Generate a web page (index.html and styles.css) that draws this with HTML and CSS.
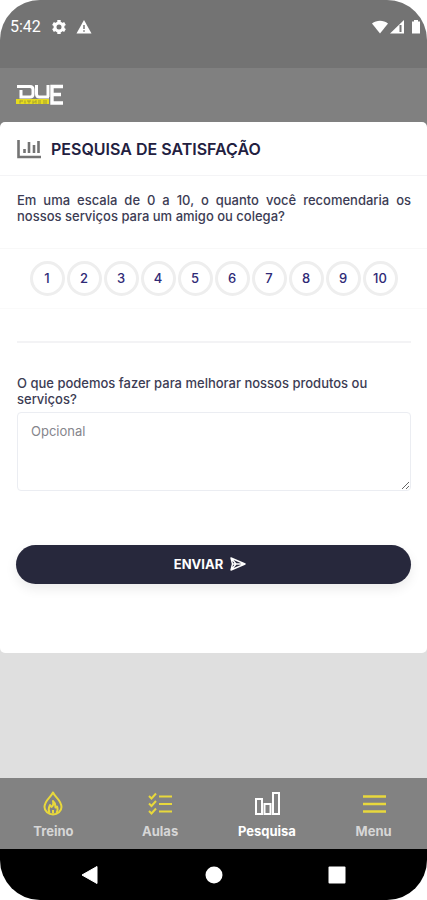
FILE: index.html
```html
<!DOCTYPE html>
<html lang="pt-BR">
<head>
  <meta charset="UTF-8">
  <meta name="viewport" content="width=device-width, initial-scale=1">
  <title>Pesquisa de Satisfação</title>
  <link rel="stylesheet" href="styles.css">
</head>
<body>

<div class="phone">
  <div class="status-bar">
    <span class="clock">5:42</span>
    <svg class="status-gear" width="16" height="16" viewBox="0 0 16 16">
      <circle cx="8" cy="8" r="4" fill="none" stroke="#fff" stroke-width="3"/>
      <path d="M8 1v3M8 12v3M2 4.500l2.500 1.500M11.500 10l2.500 1.500M2 11.500l2.500-1.500M11.500 6l2.500-1.500" stroke="#fff" stroke-width="3.400"/>
    </svg>
    <svg width="16" height="16" viewBox="0 0 16 16">
      <path d="M8 1l7.500 13.500h-15z" fill="#fff"/>
      <path d="M8 6v4M8 11.300v1.500" stroke="#737373" stroke-width="1.500"/>
    </svg>
    <div class="status-right">
      <svg width="18" height="16" viewBox="0 0 18 16">
        <path d="M1 4.500C5.500.800 12.500.800 17 4.500L9 14.500z" fill="#fff"/>
      </svg>
      <svg width="16" height="16" viewBox="0 0 16 16">
        <path d="M15 1v13.500H1z" fill="#fff"/>
        <path d="M11.500 6v7" stroke="#737373" stroke-width="2"/>
      </svg>
      <svg class="status-battery" width="10" height="16" viewBox="0 0 10 16">
        <path d="M3 1h4v1.500h2v12H1v-12h2z" fill="#fff"/>
      </svg>
    </div>
  </div>

  <header>
    <svg class="logo" width="48" height="22" viewBox="0 0 48 22" role="img" aria-label="DUE Fitness">
      <path d="M1 2.500H14Q17 2.500 17 5.500V10Q17 13 14 13H5V6" fill="none" stroke="#fff" stroke-width="3"/>
      <path d="M20.500 1V10Q20.500 13 23.500 13H33" fill="none" stroke="#fff" stroke-width="3"/>
      <path d="M32 1V13" stroke="#fff" stroke-width="3"/>
      <path d="M47 2.500H36V19H47M36 10.500H45" fill="none" stroke="#fff" stroke-width="3.400"/>
      <path d="M0 15h33v5H0z" fill="#e6dc1e"/>
      <path d="M4 16.500v3M4 17h3M9 16.500v3M11 17h4M13 17v2.500M17 16.500v3l3-3v3M22 17h3M22 19h3M27 17h4M27 19h4" stroke="#a39d30" fill="none"/>
    </svg>
  </header>

  <main>
    <form class="card">
      <div class="card-title">
        <svg width="25" height="20" viewBox="0 0 25 20">
          <path d="M1.500 1v17H24" fill="none" stroke="#737373" stroke-width="2.600"/>
          <path d="M7.500 10v4M12 3v11M17 6v8M21.500 2v12" stroke="#737373" stroke-width="2.600"/>
        </svg>
        <h1>PESQUISA DE SATISFAÇÃO</h1>
      </div>

      <p class="question">Em uma escala de 0 a 10, o quanto você recomendaria os nossos serviços para um amigo ou colega?</p>

      <div class="scores">
        <button type="button">1</button>
        <button type="button">2</button>
        <button type="button">3</button>
        <button type="button">4</button>
        <button type="button">5</button>
        <button type="button">6</button>
        <button type="button">7</button>
        <button type="button">8</button>
        <button type="button">9</button>
        <button type="button">10</button>
      </div>

      <div class="comment">
        <label for="comment">O que podemos fazer para melhorar nossos produtos ou serviços?</label>
        <textarea id="comment" placeholder="Opcional"></textarea>
      </div>

      <button type="submit" class="send">
        ENVIAR
        <svg width="18" height="16" viewBox="0 0 18 16">
          <path d="M2 2l14 6-14 6 1.500-6zM3.500 8H15M2 2l5 6-5 6" fill="none" stroke="#fff" stroke-width="1.400" stroke-linejoin="round"/>
        </svg>
      </button>
    </form>
  </main>

  <nav class="tabs">
    <a href="#treino">
      <svg width="26" height="26" viewBox="0 0 26 26" fill="none" stroke="#e8d83c" stroke-width="2" stroke-linejoin="round">
        <path d="M13 2.500C11 7 4.500 10.500 4.500 17a8.500 7.500 0 0 0 17 0C21.500 10.500 15 7 13 2.500z"/>
        <path d="M9.500 23c-2-4-.500-6 .500-8l1.500 2c2-1.500 2-4 1.500-6 3 2.500 2 4.500 2.500 6.500l1.500-1c1 2 .500 4.500-.500 6.500"/>
        <path d="M13 20v3.500"/>
      </svg>
      Treino
    </a>
    <a href="#aulas">
      <svg width="26" height="26" viewBox="0 0 26 26" fill="none" stroke="#e8d83c" stroke-width="2">
        <path d="M12 6.500h13M12 14h13M12 21.500h13"/>
        <path d="M2 6l2.500 2.500 4.500-5M2 13.500l2.500 2.500 4.500-5M2 21l2.500 2.500 4.500-5"/>
      </svg>
      Aulas
    </a>
    <a href="#pesquisa" class="active">
      <svg width="26" height="26" viewBox="0 0 26 26" fill="none" stroke="#fff" stroke-width="2">
        <path d="M2 9h6v15H2zM10.500 14h6v10h-6zM19 3h6v21h-6z"/>
      </svg>
      Pesquisa
    </a>
    <a href="#menu">
      <svg width="26" height="26" viewBox="0 0 26 26" fill="none" stroke="#e8d83c" stroke-width="2.400">
        <path d="M2 6.500h23M2 14h23M2 21.500h23"/>
      </svg>
      Menu
    </a>
  </nav>

  <div class="system-bar">
    <button type="button" aria-label="Voltar">
      <svg width="20" height="20" viewBox="0 0 20 20"><path d="M2 10L17 1.500v17z" fill="#fff" stroke="#fff" stroke-linejoin="round"/></svg>
    </button>
    <button type="button" aria-label="Início">
      <svg width="20" height="20" viewBox="0 0 20 20"><circle cx="10" cy="10" r="8.500" fill="#fff"/></svg>
    </button>
    <button type="button" aria-label="Recentes">
      <svg width="20" height="20" viewBox="0 0 20 20"><rect x="1.500" y="1.500" width="17" height="17" rx="1" fill="#fff"/></svg>
    </button>
  </div>
</div>

</body>
</html>
```
FILE: styles.css
```css
* {
  box-sizing: border-box;
}
body {
  margin: 0;
  background: #fff;
  color: #3c3c54;
  font-family: Inter, Roboto, sans-serif;
  font-size: 13px;
  line-height: 16px;
}
button {
  font-family: inherit;
  padding: 0;
  border: 0;
  cursor: pointer;
}
svg {
  display: block;
}
.phone {
  display: flex;
  flex-direction: column;
  min-height: 100vh;
  border-radius: 40px;
  overflow: hidden;
  background: #dfdfdf;
}
.status-bar {
  display: flex;
  align-items: center;
  gap: 9px;
  height: 68px;
  padding: 0 6px 14px 10px;
  background: #737373;
  color: #fff;
}
.clock {
  font-family: Roboto, sans-serif;
  font-size: 16px;
  line-height: 20px;
}
.status-gear {
  margin-left: 1px;
}
.status-right {
  display: flex;
  margin-left: auto;
}
.status-battery {
  margin-left: 6px;
}
header {
  padding: 16px;
  background: #808080;
}
main {
  flex: 1;
  background: linear-gradient(#808080 10px, #dfdfdf 10px);
}
.card {
  padding-bottom: 69px;
  border-radius: 5px;
  background: #fff;
}
.card-title {
  display: flex;
  align-items: center;
  gap: 9px;
  height: 54px;
  padding: 0 17px;
  border-bottom: 1px solid #f4f4f6;
}
.card-title h1 {
  margin: 0;
  color: #22203f;
  font-size: 16px;
  font-weight: 600;
  line-height: 20px;
}
.question {
  margin: 0;
  padding: 16px 16px 24px 17px;
  font-weight: 500;
  text-align: justify;
}
.scores {
  display: flex;
  justify-content: center;
  gap: 2px;
  padding: 12px 16px;
  border-top: 1px solid #f8f8f8;
  border-bottom: 1px solid #fafafa;
}
.scores button {
  width: 35px;
  height: 35px;
  padding-bottom: 2px;
  border: 3px solid #eee;
  border-radius: 50%;
  background: #fff;
  color: #2f2a76;
  font-size: 13px;
  font-weight: 500;
}
.comment {
  margin: 32px 16px 54px 17px;
  padding-top: 32px;
  border-top: 2px solid #f3f3f5;
}
.comment label {
  display: block;
  margin-bottom: 5px;
  font-weight: 500;
}
.comment textarea {
  display: block;
  width: 100%;
  height: 79px;
  padding: 10px 13px;
  border: 1px solid #ebedf2;
  border-radius: 4px;
  color: #3c3c54;
  font: inherit;
}
.comment textarea::placeholder {
  color: #85858c;
}
.send {
  display: flex;
  align-items: center;
  justify-content: center;
  gap: 6px;
  width: calc(100% - 32px);
  height: 39px;
  margin: 0 16px;
  padding: 0 6px 2px 0;
  border-radius: 20px;
  background: #27283c;
  box-shadow: 0 5px 12px rgba(0,0,0,0.08);
  color: #fff;
  font-size: 13px;
  font-weight: 700;
}
.tabs {
  display: grid;
  grid-template-columns: repeat(4, 1fr);
  height: 71px;
  padding-top: 12px;
  background: #828282;
}
.tabs a {
  display: flex;
  flex-direction: column;
  align-items: center;
  gap: 7px;
  color: #d6d6d6;
  font-weight: 700;
  text-decoration: none;
}
.tabs .active {
  color: #fff;
}
.system-bar {
  display: flex;
  align-items: center;
  justify-content: space-between;
  height: 51px;
  padding: 0 80px;
  background: #000;
}
.system-bar button {
  background: none;
}
```
